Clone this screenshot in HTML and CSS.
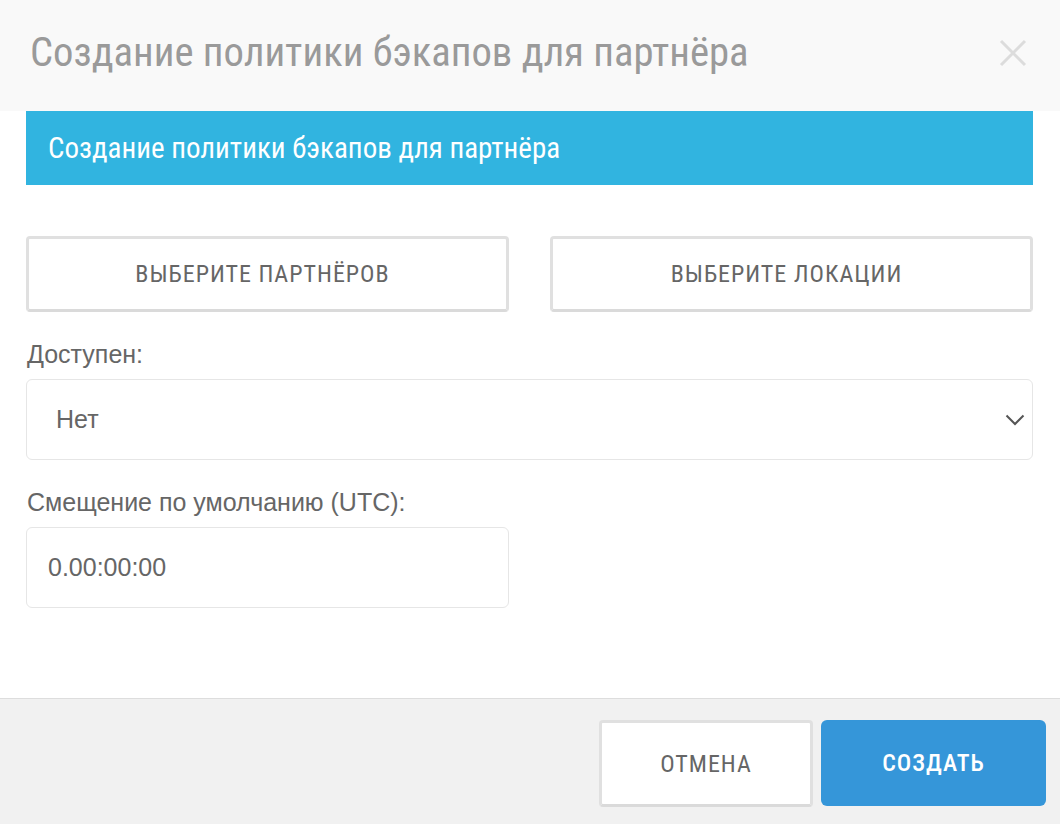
FILE: index.html
```html
<!DOCTYPE html>
<html lang="ru">
<head>
<meta charset="utf-8">
<link rel="stylesheet" href="styles.css">
</head>
<body>
<div class="modal">
  <div class="modal-header">
    <h1 class="modal-title">Создание политики бэкапов для партнёра</h1>
    <span class="close" aria-label="close">
      <svg width="28" height="28" viewBox="0 0 28 28"><path d="M2 2 L26 26 M26 2 L2 26" stroke="#dcdcdc" stroke-width="3" fill="none"/></svg>
    </span>
  </div>
  <div class="modal-body">
    <div class="banner">Создание политики бэкапов для партнёра</div>
    <div class="btn-row">
      <button class="btn-outline">ВЫБЕРИТЕ ПАРТНЁРОВ</button>
      <button class="btn-outline">ВЫБЕРИТЕ ЛОКАЦИИ</button>
    </div>
    <label class="field-label">Доступен:</label>
    <div class="select">
      <span>Нет</span>
      <svg class="chev" width="20" height="12" viewBox="0 0 20 12"><path d="M1.5 1.5 L10 10 L18.5 1.5" stroke="#555" stroke-width="2" fill="none"/></svg>
    </div>
    <label class="field-label">Смещение по умолчанию (UTC):</label>
    <div class="input-wrap">
      <div class="input">0.00:00:00</div>
    </div>
  </div>
  <div class="modal-footer">
    <button class="btn-cancel">ОТМЕНА</button>
    <button class="btn-primary">СОЗДАТЬ</button>
  </div>
</div>
</body>
</html>
```
FILE: styles.css
```css
html, body {
  margin: 0;
  padding: 0;
  background: #fff;
}
body {
  width: 1060px;
  height: 824px;
  overflow: hidden;
  font-family: "Liberation Sans", Arial, sans-serif;
}
.modal {
  display: flex;
  flex-direction: column;
  height: 824px;
}
.modal-header {
  background: #f9f9f9;
  height: 111px;
  display: flex;
  align-items: center;
  justify-content: space-between;
  padding: 0 33px 0 30px;
  box-sizing: border-box;
}
.modal-title {
  margin: 0;
  font-family: "Roboto Condensed", "Liberation Sans", sans-serif;
  font-weight: 400;
  font-size: 40.7px;
  color: #9a9a9a;
  padding-bottom: 8px;
}
.close {
  display: flex;
  width: 28px;
  height: 28px;
  margin-bottom: 6px;
}
.modal-body {
  flex: 1;
  padding: 0 27px 0 26px;
}
.banner {
  background: #31b4e0;
  color: #fff;
  height: 74px;
  display: flex;
  align-items: center;
  padding-left: 22px;
  font-family: "Roboto Condensed", "Liberation Sans", sans-serif;
  font-size: 29px;
}
.btn-row {
  display: grid;
  grid-template-columns: 1fr 1fr;
  column-gap: 41px;
  margin-top: 51px;
}
.btn-outline, .btn-cancel {
  height: 76px;
  background: #fff;
  border: 3px solid #e0e0e0;
  border-bottom-color: #dadada;
  border-radius: 4px;
  color: #666;
  font-family: "Roboto Condensed", "Roboto", sans-serif;
  font-size: 24px;
  letter-spacing: 1px;
  cursor: pointer;
}
.btn-outline {
  padding: 0 10px 0 0;
}
.field-label {
  display: block;
  margin-top: 28px;
  font-size: 25px;
  color: #666;
  line-height: 28px;
  padding-left: 1px;
}
.select {
  margin-top: 11px;
  height: 81px;
  box-sizing: border-box;
  border: 1px solid #e6e6e6;
  border-radius: 6px;
  display: flex;
  align-items: center;
  justify-content: space-between;
  padding: 0 7px 0 29px;
  font-size: 25px;
  color: #666;
}
.input-wrap {
  display: grid;
  grid-template-columns: 1fr 1fr;
  column-gap: 41px;
}
.input {
  margin-top: 11px;
  height: 81px;
  box-sizing: border-box;
  border: 1px solid #e6e6e6;
  border-radius: 6px;
  display: flex;
  align-items: center;
  padding-left: 21px;
  font-size: 25px;
  color: #666;
}
.modal-footer {
  height: 126px;
  box-sizing: border-box;
  border-top: 1px solid #ddd;
  background: #f1f1f1;
  display: flex;
  justify-content: flex-end;
  align-items: flex-start;
  padding: 21px 14px 0 0;
  gap: 8px;
}
.btn-cancel {
  width: 214px;
  height: 87px;
}
.btn-primary {
  width: 225px;
  height: 86px;
  background: #3596d9;
  border: none;
  border-radius: 6px;
  color: #fff;
  font-family: "Roboto Condensed", "Roboto", sans-serif;
  font-size: 24px;
  letter-spacing: 1px;
  font-weight: 500;
}
```
